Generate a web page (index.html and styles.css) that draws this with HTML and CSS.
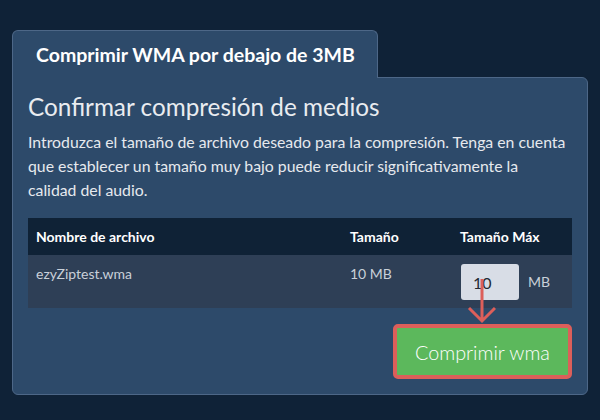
FILE: index.html
```html
<!DOCTYPE html>
<html lang="es">
<head>
<meta charset="utf-8">
<title>Comprimir WMA</title>
<link rel="stylesheet" href="styles.css">
</head>
<body>
<div class="wrap">
  <div class="tab">Comprimir WMA por debajo de 3MB</div>
  <div class="panel">
    <h2 class="title">Confirmar compresión de medios</h2>
    <p class="desc">Introduzca el tamaño de archivo deseado para la compresión. Tenga en cuenta que establecer un tamaño muy bajo puede reducir significativamente la calidad del audio.</p>
    <table class="files">
      <colgroup><col class="c1"><col class="c2"><col class="c3"></colgroup>
      <thead>
        <tr><th>Nombre de archivo</th><th>Tamaño</th><th>Tamaño Máx</th></tr>
      </thead>
      <tbody>
        <tr>
          <td>ezyZiptest.wma</td>
          <td>10 MB</td>
          <td class="maxcell">
            <div class="maxwrap"><input class="maxin" type="text" value="10"><span class="unit">MB</span></div>
            <svg class="arrow" width="30" height="48" viewBox="0 0 30 48"><path d="M16 2 V44 M3 31 L16 44 L29 31" fill="none" stroke="#dc5f5a" stroke-width="3" stroke-linecap="butt"/></svg>
          </td>
        </tr>
      </tbody>
    </table>
    <div class="actions"><button class="go">Comprimir wma</button></div>
  </div>
</div>
</body>
</html>
```
FILE: styles.css
```css
html, body { margin: 0; padding: 0; }
body {
  background: #0f2237;
  font-family: Lato, "Noto Sans", sans-serif;
  width: 600px;
  height: 420px;
  overflow: hidden;
}
.wrap { padding: 30px 12px 0 12px; }
.tab {
  display: inline-block;
  position: relative;
  z-index: 1;
  background: #2d4a6a;
  border: 1px solid #4d6787;
  border-bottom: none;
  border-radius: 6px 6px 0 0;
  padding: 1px 22px 0 23px;
  height: 46px;
  line-height: 46px;
  margin-bottom: -1px;
  color: #ffffff;
  font-weight: 700;
  font-size: 19.5px;
  vertical-align: top;
}
.panel {
  background: #2d4a6a;
  border: 1px solid #4d6787;
  border-radius: 0 6px 6px 6px;
  padding: 14px 15px 15px 15px;
}
.title {
  margin: 0;
  font-size: 24.3px;
  line-height: 30px;
  font-weight: 400;
  color: #e9ecf0;
}
.desc {
  margin: 8px 0 0 0;
  padding-right: 5px;
  font-size: 15.8px;
  line-height: 24px;
  color: #e6e9ee;
}
.files {
  margin-top: 16px;
  width: 544px;
  border-collapse: collapse;
  table-layout: fixed;
}
.c1 { width: 314px; }
.c2 { width: 110px; }
.c3 { width: 120px; }
.files th {
  background: #0f2236;
  color: #ffffff;
  text-align: left;
  font-weight: 700;
  font-size: 14px;
  height: 37px;
  padding: 0 8px;
  line-height: 20px;
}
.files td {
  background: #2e3f56;
  color: #c9d0d9;
  font-size: 14px;
  line-height: 20px;
  padding: 9px 8px 8px 8px;
  vertical-align: top;
}
.maxcell { position: relative; }
.maxwrap { display: flex; align-items: center; gap: 9px; margin-left: 1px; }
.maxin {
  width: 58px;
  height: 36px;
  box-sizing: border-box;
  border: none;
  border-radius: 3px;
  background: #d8dde6;
  padding: 0 0 0 12px;
  font-family: Lato, "Noto Sans", sans-serif;
  font-size: 16px;
  color: #222a33;
  outline: none;
}
.unit { font-size: 14px; color: #c9d0d9; }
.arrow { position: absolute; left: 14px; top: 22px; }
.actions { display: flex; justify-content: flex-end; margin-top: 16px; }
.go {
  height: 55px;
  box-sizing: border-box;
  border: 4px solid #dc5f5a;
  border-radius: 5px;
  background: #5cb85c;
  color: #ffffff;
  font-family: Lato, "Noto Sans", sans-serif;
  font-size: 19.8px;
  font-weight: 300;
  padding: 0 8px;
  width: 179px;
}
```
